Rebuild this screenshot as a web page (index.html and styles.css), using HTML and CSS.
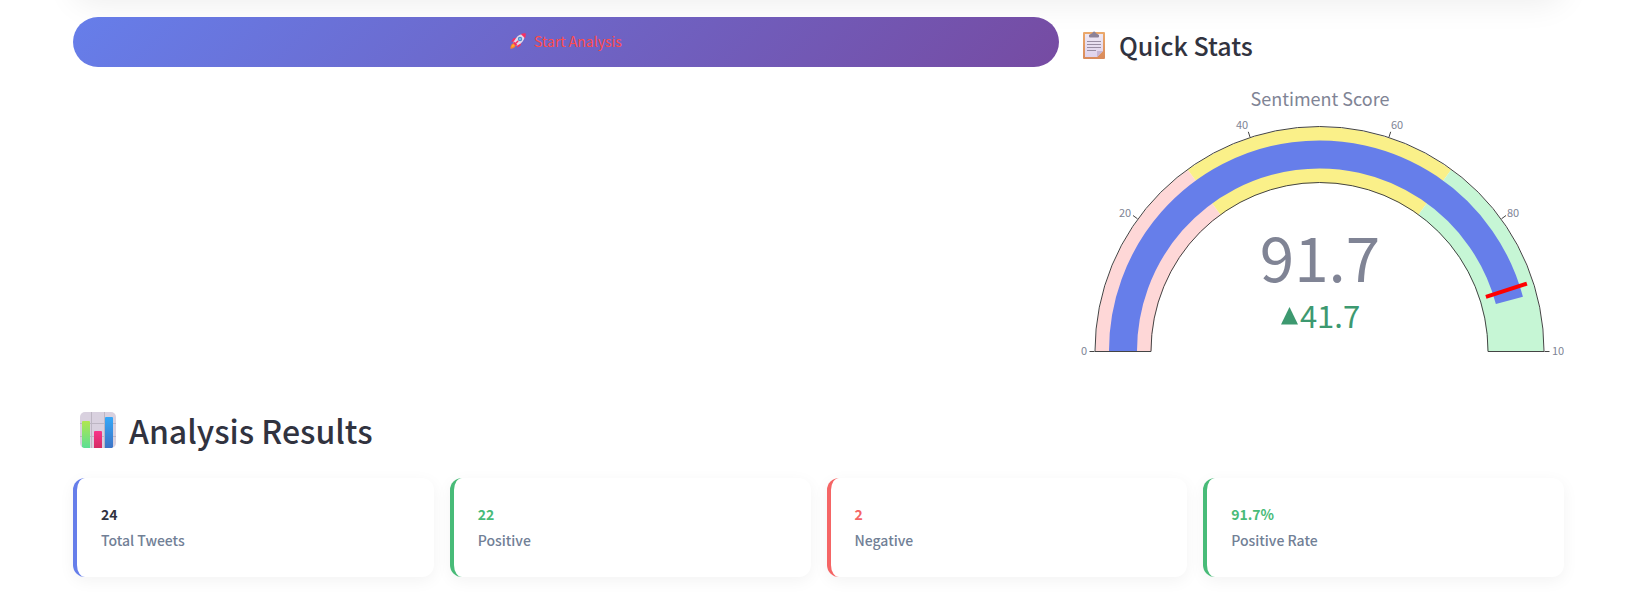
FILE: index.html
```html
<!DOCTYPE html>
<html lang="en">
<head>
<meta charset="utf-8">
<title>Sentiment Analysis</title>
<link rel="stylesheet" href="styles.css">
</head>
<body>
<main class="page">
  <div class="input-panel"></div>
  <section class="top-row">
    <div class="action-column">
      <button class="start-button" type="button">
        <svg class="rocket-icon" viewBox="0 0 16 16" aria-hidden="true">
          <path fill="#f92f60" d="M7 4.500 3.200 5.600 1.200 8.800 5 8.600zM11.500 9 10.400 12.800 7.200 14.800 7.400 11z"/>
          <path fill="#ff822d" d="M3.500 10.300C1.500 10.800.5 12.500.3 15.700c3.200-.2 5-1.200 5.400-3.200z"/>
          <path fill="#ffb02e" d="M3.800 11.300c-1.400.4-2 1.500-2.200 2.900 1.500-.2 2.500-.8 2.900-2.200z"/>
          <path fill="#e1d8ec" d="M14.900 1.100C11 .9 8 2.400 6 5.200L3 9.600l3.400 3.400L10.800 10.400c2.800-2.200 4.300-5.400 4.100-9.300z"/>
          <path fill="#f92f60" d="M15.700.3c-2-.1-3.600.1-4.900.7l4.200 4.200c.6-1.300.8-2.900.7-4.900zM4 8.600 3 10l3 3 1.400-1z"/>
          <circle cx="10" cy="6" r="2.200" fill="#4689c9"/>
          <circle cx="10" cy="6" r="1.300" fill="#73bdf0"/>
          <path stroke="#f92f60" stroke-width="1.500" stroke-linecap="round" d="m5.500 10.500 2.300-2.300"/>
        </svg>
        <span>Start Analysis</span>
      </button>
    </div>
    <div class="stats-column">
      <h2 class="stats-title">
        <svg class="clipboard-icon" viewBox="0 0 22 28" aria-hidden="true">
          <defs>
            <linearGradient id="board" x1="0" y1="0" x2="0" y2="1"><stop offset="0" stop-color="#eba96b"/><stop offset="1" stop-color="#d98a5b"/></linearGradient>
            <linearGradient id="paper" x1="0" y1="0" x2="0" y2="1"><stop offset="0" stop-color="#eee7f3"/><stop offset="1" stop-color="#dfd2ec"/></linearGradient>
          </defs>
          <rect y="1" width="22" height="27" rx="1" fill="url(#board)"/>
          <path fill="url(#paper)" d="M2 3h18v17l-6 6H2z"/>
          <path fill="#c7b5d4" d="M14 20h6l-6 6z"/>
          <path fill="#8d8297" d="M9.500 2a1.600 1.600 0 0 1 3.200 0l3.300 2v1.500a1 1 0 0 1-1 1H7a1 1 0 0 1-1-1V4z"/>
          <path stroke="#998da3" d="M4 10.500h14M4 13.500h14M4 16.500h14M4 19.500h9"/>
        </svg>
        <span>Quick Stats</span>
      </h2>
      <svg class="gauge" viewBox="0 0 489 310" role="img" aria-label="Sentiment Score 91.7">
        <text class="gauge-title" x="245" y="26">Sentiment Score</text>
        <g transform="translate(244.500 271)" fill="none">
          <g stroke-width="56">
            <path class="band-low" d="M-196 0A196 196 0 0 1-115.200-158.600"/>
            <path class="band-mid" d="M-115.200-158.600A196 196 0 0 1 115.200-158.600"/>
            <path class="band-high" d="M115.200-158.600A196 196 0 0 1 196 0"/>
          </g>
          <path class="value-arc" d="M-196.500 0A196.500 196.500 0 0 1 189.900-50.600"/>
          <path class="outline" d="M-224.500 0.500V0A224.500 224.500 0 0 1 224.500 0V.5H168.500V0A168.500 168.500 0 0 0-168.500 0V.5z"/>
          <path class="outline" d="M-225 .5h-5M-182-132.200l-4.500-3.300M-69.500-214l-1.700-5.200M69.500-214l1.700-5.200M182-132.200l4.500-3.300M225 .5h5"/>
          <path class="threshold" d="M166.400-54.100 207.400-67.400"/>
        </g>
        <g class="tick-labels">
          <text x="9" y="275">0</text>
          <text x="50" y="137">20</text>
          <text x="167" y="49">40</text>
          <text x="322" y="49">60</text>
          <text x="438" y="137">80</text>
          <text x="483" y="275">10</text>
        </g>
        <text class="gauge-value" x="245" y="202">91.7</text>
        <path class="delta-arrow" d="M206 244.500 214.500 227 223 244.500z"/>
        <text class="gauge-delta" x="255" y="248">41.7</text>
      </svg>
    </div>
  </section>
  <h1 class="results-title">
    <svg class="chart-icon" viewBox="0 0 36 36" aria-hidden="true">
      <defs>
        <linearGradient id="green" x1="0" y1="0" x2="0" y2="1"><stop offset="0" stop-color="#b0e650"/><stop offset="1" stop-color="#5cdf94"/></linearGradient>
        <linearGradient id="pink" x1="0" y1="0" x2="0" y2="1"><stop offset="0" stop-color="#f8368a"/><stop offset="1" stop-color="#d52b63"/></linearGradient>
        <linearGradient id="blue" x1="0" y1="0" x2="0" y2="1"><stop offset="0" stop-color="#35a8f8"/><stop offset="1" stop-color="#3d74c6"/></linearGradient>
      </defs>
      <rect width="36" height="36" rx="5" fill="#d9d1df"/>
      <path stroke="#bdb6c3" d="M11.500 0v36M24.500 0v36M0 11.500h36M0 24.500h36"/>
      <path fill="url(#green)" d="M2 10a1 1 0 0 1 1-1h6a1 1 0 0 1 1 1v26H4l-2-1z"/>
      <path fill="url(#pink)" d="M14 20a1 1 0 0 1 1-1h6a1 1 0 0 1 1 1v16h-8z"/>
      <path fill="url(#blue)" d="M25 6a1 1 0 0 1 1-1h6a1 1 0 0 1 1 1v29l-1 1h-7z"/>
    </svg>
    <span>Analysis Results</span>
  </h1>
  <section class="cards">
    <article class="card card-total"><strong class="card-value">24</strong><span class="card-label">Total Tweets</span></article>
    <article class="card card-positive"><strong class="card-value">22</strong><span class="card-label">Positive</span></article>
    <article class="card card-negative"><strong class="card-value">2</strong><span class="card-label">Negative</span></article>
    <article class="card card-positive"><strong class="card-value">91.7%</strong><span class="card-label">Positive Rate</span></article>
  </section>
</main>
</body>
</html>
```

FILE: styles.css
```css
* { box-sizing: border-box; }

body {
  margin: 0;
  background: #fff;
  color: #31333f;
  font-family: "Source Sans Pro", "Noto Sans CJK SC", sans-serif;
  font-size: 14px;
}

.page {
  padding: 0 64px 16px 73px;
  overflow: hidden;
}

.input-panel {
  height: 80px;
  margin-top: -84px;
  margin-bottom: 21px;
  border-radius: 20px;
  background: #fff;
  box-shadow: 0 8px 32px rgba(0, 0, 0, 0.07);
}

.top-row {
  display: flex;
  gap: 16px;
}

.action-column { flex: 1 1 calc(66.667% - 16px); min-width: 0; }
.stats-column { flex: 1 1 calc(33.333% - 16px); min-width: 0; }

.start-button {
  display: flex;
  align-items: center;
  justify-content: center;
  gap: 8px;
  width: 100%;
  height: 50px;
  padding: 0 0 2px;
  border: 0;
  border-radius: 25px;
  background: linear-gradient(135deg, #667eea 0%, #764ba2 100%);
  color: #ff4b4b;
  font: inherit;
}

.rocket-icon { width: 16px; height: 16px; }

.stats-title,
.results-title {
  display: flex;
  align-items: center;
  margin: 0;
  font-weight: 500;
}

.stats-title {
  gap: 14px;
  height: 56px;
  padding-left: 8px;
  font-size: 25px;
}

.clipboard-icon { width: 22px; height: 28px; }

.gauge {
  display: block;
  width: 100%;
  margin-top: 7px;
}

.gauge text { fill: #808495; text-anchor: middle; }
.gauge .gauge-title { font-size: 18px; }
.gauge .gauge-value { font-size: 62px; }
.gauge .gauge-delta { font-size: 31px; fill: #3d9970; }
.tick-labels { font-size: 11px; }
.delta-arrow { fill: #3d9970; }

.band-low { stroke: #fed7d7; }
.band-mid { stroke: #faf089; }
.band-high { stroke: #c6f6d5; }
.value-arc { stroke: #667eea; stroke-width: 28; }
.outline { stroke: #444; stroke-width: 1; }
.threshold { stroke: #f00; stroke-width: 4; }

.results-title {
  gap: 13px;
  height: 46px;
  margin: 17px 0 25px;
  padding-left: 7px;
  font-size: 32px;
}

.chart-icon { width: 36px; height: 36px; }

.cards {
  display: grid;
  grid-template-columns: repeat(4, 1fr);
  gap: 16px;
}

.card {
  display: flex;
  flex-direction: column;
  padding: 23px 24px 24px;
  border-left: 4px solid #667eea;
  border-radius: 12px;
  background: #fff;
  box-shadow: 0 4px 16px rgba(0, 0, 0, 0.05);
  line-height: 26px;
}

.card-value { font-weight: 700; }
.card-label { color: #718096; font-weight: 500; }

.card-positive { border-left-color: #48bb78; }
.card-positive .card-value { color: #48bb78; }
.card-negative { border-left-color: #f56565; }
.card-negative .card-value { color: #f56565; }
```
